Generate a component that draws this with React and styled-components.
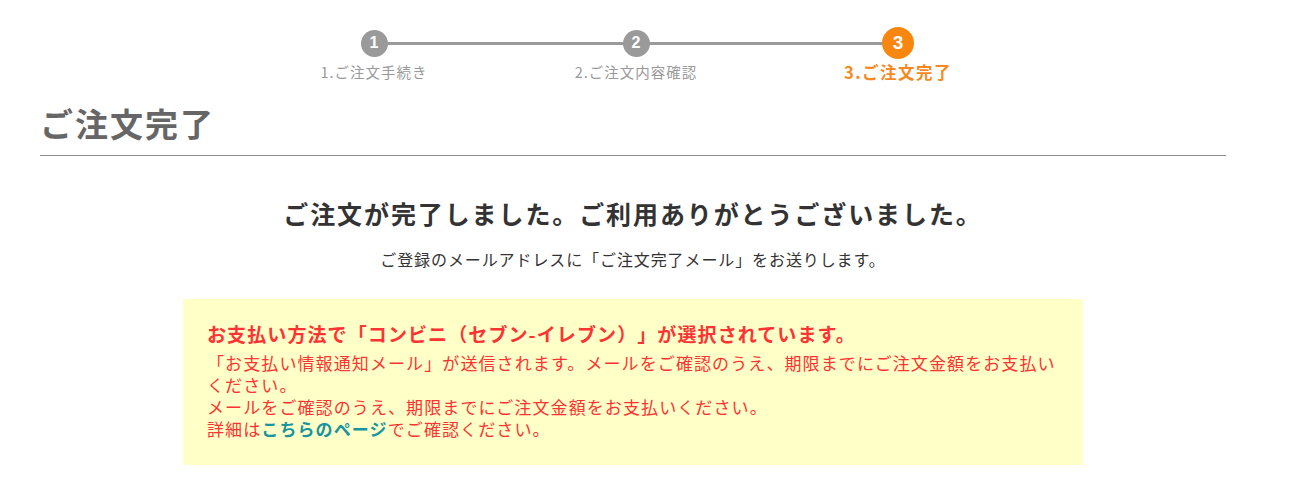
import React from "react";
import styled, { createGlobalStyle } from "styled-components";

const GlobalStyle = createGlobalStyle`
  body {
    margin: 0;
    background: #fff;
    font-family: "Noto Sans CJK JP", "Noto Sans", sans-serif;
    color: #333;
    text-spacing-trim: space-all;
  }
`;

const steps = [
  { id: 1, label: "1.ご注文手続き" },
  { id: 2, label: "2.ご注文内容確認" },
  { id: 3, label: "3.ご注文完了", active: true },
];

const App = () => {
  return (
    <>
      <GlobalStyle />
      <Page>
        <StepBar>
          <StepLine />
          {steps.map((step) => (
            <Step key={step.id}>
              <CircleRow>
                <Circle $active={step.active}>{step.id}</Circle>
              </CircleRow>
              <StepLabel $active={step.active}>{step.label}</StepLabel>
            </Step>
          ))}
        </StepBar>

        <PageTitle>ご注文完了</PageTitle>

        <Thanks>ご注文が完了しました。ご利用ありがとうございました。</Thanks>
        <Notice>
          ご登録のメールアドレスに「ご注文完了メール」をお送りします。
        </Notice>

        <PaymentBox>
          <PaymentTitle>
            お支払い方法で「コンビニ（セブン-イレブン）」が選択されています。
          </PaymentTitle>
          <PaymentText>
            「お支払い情報通知メール」が送信されます。メールをご確認のうえ、期限までにご注文金額をお支払いください。
            <br />
            メールをご確認のうえ、期限までにご注文金額をお支払いください。
            <br />
            詳細は<DetailLink href="#">こちらのページ</DetailLink>でご確認ください。
          </PaymentText>
        </PaymentBox>
      </Page>
    </>
  );
};

export default App;

const Page = styled.div`
  width: 1186px;
  margin-left: 40px;
  display: flex;
  flex-direction: column;
`;

const StepBar = styled.div`
  position: relative;
  align-self: center;
  display: grid;
  grid-template-columns: repeat(3, 262px);
  margin-top: 27px;
  margin-left: 6px;
`;

const StepLine = styled.div`
  position: absolute;
  top: 15px;
  left: 131px;
  right: 131px;
  height: 3px;
  background: #9a9a9a;
`;

const Step = styled.div`
  display: flex;
  flex-direction: column;
  align-items: center;
  position: relative;
`;

const CircleRow = styled.div`
  height: 32px;
  display: flex;
  align-items: center;
  justify-content: center;
`;

const Circle = styled.div`
  width: ${(props) => (props.$active ? "32px" : "27px")};
  height: ${(props) => (props.$active ? "32px" : "27px")};
  border-radius: 50%;
  background: ${(props) => (props.$active ? "#f9870f" : "#9a9a9a")};
  color: #fff;
  font-family: "Liberation Sans", Arial, sans-serif;
  font-weight: 700;
  font-size: ${(props) => (props.$active ? "19px" : "16px")};
  display: flex;
  align-items: center;
  justify-content: center;
`;

const StepLabel = styled.div`
  margin-top: 3px;
  line-height: 20px;
  font-size: ${(props) => (props.$active ? "16.5px" : "14.5px")};
  font-weight: ${(props) => (props.$active ? 700 : 400)};
  letter-spacing: ${(props) => (props.$active ? "1.5px" : "1px")};
  color: ${(props) => (props.$active ? "#f7891f" : "#999")};
`;

const PageTitle = styled.h1`
  margin: 21px 0 0;
  padding-bottom: 12px;
  border-bottom: 1px solid #8c8c8c;
  font-size: 33px;
  line-height: 40px;
  font-weight: 700;
  letter-spacing: 2px;
  color: #666;
`;

const Thanks = styled.h2`
  margin: 40px 0 0;
  text-align: center;
  font-size: 25px;
  line-height: 34px;
  font-weight: 700;
  letter-spacing: 1.9px;
  color: #333;
`;

const Notice = styled.p`
  margin: 18px 0 0;
  text-align: center;
  font-size: 16px;
  line-height: 22px;
  letter-spacing: 0.9px;
  color: #333;
`;

const PaymentBox = styled.div`
  align-self: center;
  width: 900px;
  box-sizing: border-box;
  margin-top: 29px;
  padding: 22px 24px 25px;
  background: #ffffc8;
  color: #f33;
`;

const PaymentTitle = styled.p`
  margin: 0;
  font-size: 19px;
  line-height: 26px;
  font-weight: 700;
  letter-spacing: 1.1px;
`;

const PaymentText = styled.p`
  margin: 5px 0 0;
  font-size: 17px;
  line-height: 22px;
  letter-spacing: 1.1px;
`;

const DetailLink = styled.a`
  color: #17949f;
  font-weight: 700;
  text-decoration: none;
`;
